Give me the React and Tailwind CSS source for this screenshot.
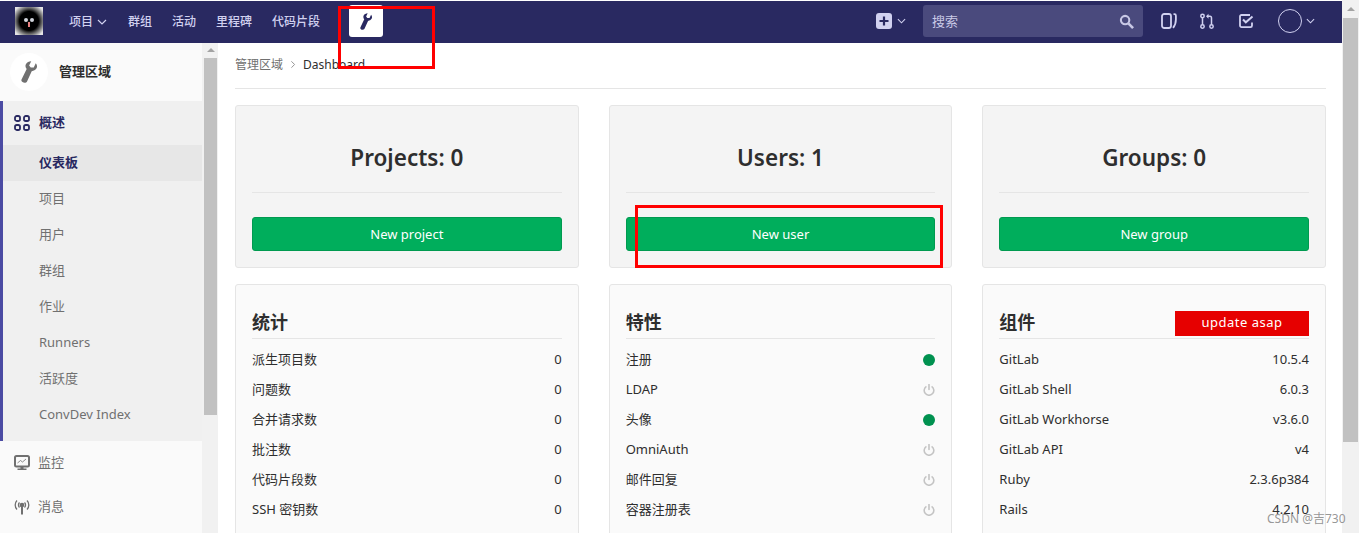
import React from 'react';

const font = { fontFamily: '"Noto Sans", "Noto Sans CJK SC", sans-serif' };

function WrenchIcon({ className }) {
  return (
    <svg viewBox="3.500 -0.500 10.500 17.500" preserveAspectRatio="none" className={className} fill="currentColor">
      <path
        transform="rotate(-20 8 8)"
        d="M15.200 3.400c.4 1.600 0 3.200-1.100 4.200-1 .9-2.300 1.200-3.600.9L5 14.900c-.7.8-1.900.9-2.700.2-.9-.8-1-2-.2-2.800l5.900-6.600c-.4-1.300-.1-2.700.8-3.700C9.900.9 11.400.5 12.900 1L10.500 3.600l.4 2 1.900.5z"
      />
    </svg>
  );
}

function PowerIcon() {
  return (
    <svg viewBox="0 0 12 12" className="w-3 h-3 text-[#c4c4c4]" fill="none" stroke="currentColor" strokeWidth="1.600">
      <path d="M3.400 2.400a4.800 4.800 0 1 0 5.200 0" />
      <path d="M6 .5v5" strokeLinecap="round" />
    </svg>
  );
}

function Dot() {
  return <span className="w-3 h-3 rounded-full bg-[#00914f]" />;
}

function Chevron({ className }) {
  return (
    <svg viewBox="0 0 10 6" className={className} fill="none" stroke="currentColor" strokeWidth="1.200">
      <path d="M1 1l4 4 4-4" />
    </svg>
  );
}

function TopNav() {
  const links = ['群组', '活动', '里程碑', '代码片段'];
  return (
    <header className="h-[42px] mt-px pb-0.5 bg-[#292961] flex items-center shrink-0 text-[#d1d1f0]">
      {/* avatar logo */}
      <div className="ml-[15px] w-7 h-7 bg-[radial-gradient(circle,#000_48%,#555_62%,#e4e4e4_88%)] relative shrink-0">
        <span className="absolute left-[9px] top-[11px] w-1 h-1 rounded-full bg-gray-300" />
        <span className="absolute left-[15px] top-[11px] w-1 h-1 rounded-full bg-gray-300" />
        <span className="absolute left-[13px] top-[15px] w-0.5 h-[5px] bg-[#e88080]" />
      </div>
      <nav className="flex items-center ml-[26px] text-[12px] font-medium">
        <span className="flex items-center gap-1 mr-[21px] pt-0.5">
          项目
          <Chevron className="w-2.5 h-1.5" />
        </span>
        {links.map((l) => (
          <span key={l} className="mr-[20px] pt-0.5">{l}</span>
        ))}
        <span className="ml-[9px] w-[34px] h-[32px] bg-white rounded-[3px] flex items-center justify-center text-[#292961]">
          <WrenchIcon className="w-3 h-[17px]" />
        </span>
      </nav>
      <div className="ml-auto flex items-center">
        <svg viewBox="0 0 16 16" className="w-4 h-4 text-[#d1d1f0]">
          <rect width="16" height="16" rx="3" fill="currentColor" />
          <path d="M8 3.500v9M3.500 8h9" stroke="#292961" strokeWidth="2.200" />
        </svg>
        <Chevron className="w-[9px] h-1.5 ml-[5px]" />
        <div className="ml-[17px] w-[220px] h-8 rounded-[3px] bg-[#4a4a7d] flex items-center justify-between pl-[9px] pr-[9px] text-[13px] text-[#c9c9e6]">
          <span className="pt-0.5">搜索</span>
          <svg viewBox="0 0 16 16" className="w-[15px] h-[15px]" fill="none" stroke="currentColor" strokeWidth="2.200">
            <circle cx="6.500" cy="6.500" r="4.500" />
            <path d="M10 10l5 5" strokeWidth="2.800" />
          </svg>
        </div>
        {/* issue boards */}
        <svg viewBox="0 0 16 16" className="ml-[18px] w-4 h-4" fill="none" stroke="currentColor" strokeWidth="1.800">
          <rect x="1" y="1" width="9" height="14" rx="2.200" />
          <path d="M12.500 1.200h1c.8 0 1.400.6 1.400 1.500v3.800c0 3.200-.8 6-2.900 8.300" />
        </svg>
        {/* merge requests */}
        <svg viewBox="0 0 14 16" className="ml-[23px] w-[14px] h-4" fill="none" stroke="currentColor" strokeWidth="1.500">
          <circle cx="2.500" cy="3" r="1.700" />
          <circle cx="2.500" cy="13.500" r="1.700" />
          <circle cx="11.500" cy="13.500" r="1.700" />
          <path d="M2.500 4.700v7.100M11.500 11.800V5c0-1-.5-1.700-1.500-1.700H7.500" />
          <path d="M8.500 .8L6 3.300l2.500 2.400z" fill="currentColor" stroke="none" />
        </svg>
        {/* todos */}
        <svg viewBox="0 0 16 16" className="ml-[24px] w-4 h-4" fill="none" stroke="currentColor" strokeWidth="1.800">
          <path d="M14 9.500v3c0 1-.7 1.600-1.500 1.600h-9C2.700 14.100 2 13.500 2 12.500v-9C2 2.700 2.700 2 3.500 2H12" />
          <path d="M5 6.500l2.800 2.800L14.500 3.500" strokeWidth="2" />
        </svg>
        <div className="ml-[24px] w-6 h-6 rounded-full border border-[#d1d1f0]" />
        <Chevron className="w-[9px] h-1.5 ml-[4px] mr-[27px]" />
      </div>
    </header>
  );
}

function Sidebar() {
  const subItems = ['项目', '用户', '群组', '作业', 'Runners', '活跃度', 'ConvDev Index'];
  return (
    <aside className="w-[218px] shrink-0 flex bg-[#f1f1f1] overflow-hidden">
      <div className="w-[202px] shrink-0 bg-[#fafafa]">
        <div className="h-[58px] flex items-center pl-[10px] gap-[11px]">
          <span className="w-[38px] h-[38px] rounded-full bg-white flex items-center justify-center text-[#707070]">
            <WrenchIcon className="w-4 h-[22px]" />
          </span>
          <span className="text-[13px] font-bold text-[#2e2e2e]">管理区域</span>
        </div>
        <div className="bg-[#f0f0f0] border-l-[3px] border-[#4b4ba3] h-[340px]">
          <div className="h-[44px] flex items-center pl-[11px] gap-[9px] text-[#292961] font-bold text-[13px]">
            <svg viewBox="0 0 16 16" className="w-4 h-4" fill="none" stroke="currentColor" strokeWidth="1.800">
              <rect x="1" y="1" width="5" height="5" rx="1.800" />
              <rect x="10" y="1" width="5" height="5" rx="1.800" />
              <rect x="1" y="10" width="5" height="5" rx="1.800" />
              <rect x="10" y="10" width="5" height="5" rx="1.800" />
            </svg>
            概述
          </div>
          <div className="h-9 bg-[#e7e7e7] flex items-center pl-9 text-[13px] font-bold text-[#292961]">仪表板</div>
          {subItems.map((s) => (
            <div key={s} className="h-9 flex items-center pl-9 text-[13px] text-[#707070]">{s}</div>
          ))}
        </div>
        <div className="h-11 flex items-center pl-[14px] gap-2 text-[13px] text-[#707070]">
          <svg viewBox="0 0 16 16" className="w-4 h-4" fill="none">
            <rect x="1" y="1" width="14" height="10.500" rx="1.500" stroke="currentColor" strokeWidth="2" />
            <path d="M3.500 8l3-2.500 2 1.500 3.500-3" stroke="currentColor" strokeWidth=".8" />
            <path d="M6.500 12h3v1.500h3V15h-9v-1.500h3z" fill="currentColor" />
          </svg>
          监控
        </div>
        <div className="h-11 flex items-center pl-[14px] gap-2 text-[13px] text-[#707070]">
          <svg viewBox="0 0 16 16" className="w-4 h-4" fill="none" stroke="currentColor" strokeWidth="1.300">
            <circle cx="8" cy="6" r="1.700" fill="currentColor" />
            <path d="M5.500 3.500a3.500 3.500 0 0 0 0 5M10.500 3.500a3.500 3.500 0 0 1 0 5M3 1.500a6.500 6.500 0 0 0 0 9M13 1.500a6.500 6.500 0 0 1 0 9" />
            <path d="M8 7.500v8" strokeWidth="2" />
          </svg>
          消息
        </div>
      </div>
      {/* sidebar scrollbar */}
      <div className="w-4 shrink-0 pl-0.5 pr-px">
        <div className="h-[15px] flex justify-center pt-[5px]">
          <span className="h-0 border-x-[4px] border-x-transparent border-b-[4px] border-b-[#a3a3a3]" />
        </div>
        <div className="h-[357px] bg-[#c1c1c1]" />
      </div>
    </aside>
  );
}

function TopCard({ title, action }) {
  return (
    <div className="h-[163px] bg-[#f4f4f4] border border-[#e5e5e5] rounded-[3px] px-4">
      <h3 className="h-[87px] pt-[17px] flex items-center justify-center border-b border-[#e5e5e5] text-[22.5px] font-semibold text-[#2e2e2e]">
        {title}
      </h3>
      <button className="mt-6 w-full h-[34px] pt-0.5 bg-[#00ae5c] border border-[#009a50] rounded-[3px] text-[13px] text-white">
        {action}
      </button>
    </div>
  );
}

function InfoCard({ title, badge, rows }) {
  return (
    <div className="h-[300px] bg-[#fafafa] border border-[#e5e5e5] rounded-[3px] px-4 pt-[26px]">
      <div className="h-[28px] flex items-center justify-between border-b border-[#e5e5e5]">
        <h4 className="text-[18px] font-bold text-[#2e2e2e] leading-none -mt-[5px]">{title}</h4>
        {badge && (
          <span className="w-[134px] h-[25px] -mt-[3px] bg-[#e60000] text-white text-[13px] tracking-[0.5px] flex items-center justify-center">
            {badge}
          </span>
        )}
      </div>
      <div className="pt-[6px]">
        {rows.map(([k, v]) => (
          <div key={k} className="h-[30px] flex items-center justify-between text-[13px] text-[#2e2e2e]">
            <span>{k}</span>
            {v === 'on' ? <Dot /> : v === 'off' ? <PowerIcon /> : <span>{v}</span>}
          </div>
        ))}
      </div>
    </div>
  );
}

const statRows = [
  ['派生项目数', '0'],
  ['问题数', '0'],
  ['合并请求数', '0'],
  ['批注数', '0'],
  ['代码片段数', '0'],
  ['SSH 密钥数', '0'],
];

const featureRows = [
  ['注册', 'on'],
  ['LDAP', 'off'],
  ['头像', 'on'],
  ['OmniAuth', 'off'],
  ['邮件回复', 'off'],
  ['容器注册表', 'off'],
];

const componentRows = [
  ['GitLab', '10.5.4'],
  ['GitLab Shell', '6.0.3'],
  ['GitLab Workhorse', 'v3.6.0'],
  ['GitLab API', 'v4'],
  ['Ruby', '2.3.6p384'],
  ['Rails', '4.2.10'],
];

export default function App() {
  return (
    <div className="relative h-[533px] w-[1359px] overflow-hidden flex bg-white" style={font}>
      <div className="w-[1342px] shrink-0 flex flex-col">
        <TopNav />
        <div className="flex flex-1 min-h-0">
          <Sidebar />
          <main className="flex-1 pl-[17px] pr-4 overflow-hidden">
            <div className="h-[46px] flex items-center gap-[6px] border-b border-[#e5e5e5] text-[12px] pb-[2px]">
              <span className="text-[#707070]">管理区域</span>
              <Chevron className="w-2 h-[5px] -rotate-90 text-[#909090]" />
              <span className="text-[#2e2e2e]">Dashboard</span>
            </div>
            <div className="grid grid-cols-3 gap-x-[30px] gap-y-4 mt-4">
              <TopCard title="Projects: 0" action="New project" />
              <TopCard title="Users: 1" action="New user" />
              <TopCard title="Groups: 0" action="New group" />
              <InfoCard title="统计" rows={statRows} />
              <InfoCard title="特性" rows={featureRows} />
              <InfoCard title="组件" badge="update asap" rows={componentRows} />
            </div>
          </main>
        </div>
      </div>
      {/* page scrollbar */}
      <div className="w-[17px] shrink-0 bg-[#f1f1f1] px-px">
        <div className="h-[18px] flex justify-center pt-[7px]">
          <span className="h-0 border-x-[4px] border-x-transparent border-b-[4px] border-b-[#a3a3a3]" />
        </div>
        <div className="h-[424px] bg-[#c1c1c1]" />
      </div>

      {/* hand-drawn red callouts */}
      <div className="absolute left-[338px] top-[6px] w-[97px] h-[63px] border-[3px] border-[#ff0000]" />
      <div className="absolute left-[635px] top-[205px] w-[308px] h-[63px] border-[3px] border-[#ff0000]" />
      <span className="absolute left-[1267px] top-[510px] text-[12px] text-[#8a8a8a]/90">CSDN @吉730</span>
    </div>
  );
}
